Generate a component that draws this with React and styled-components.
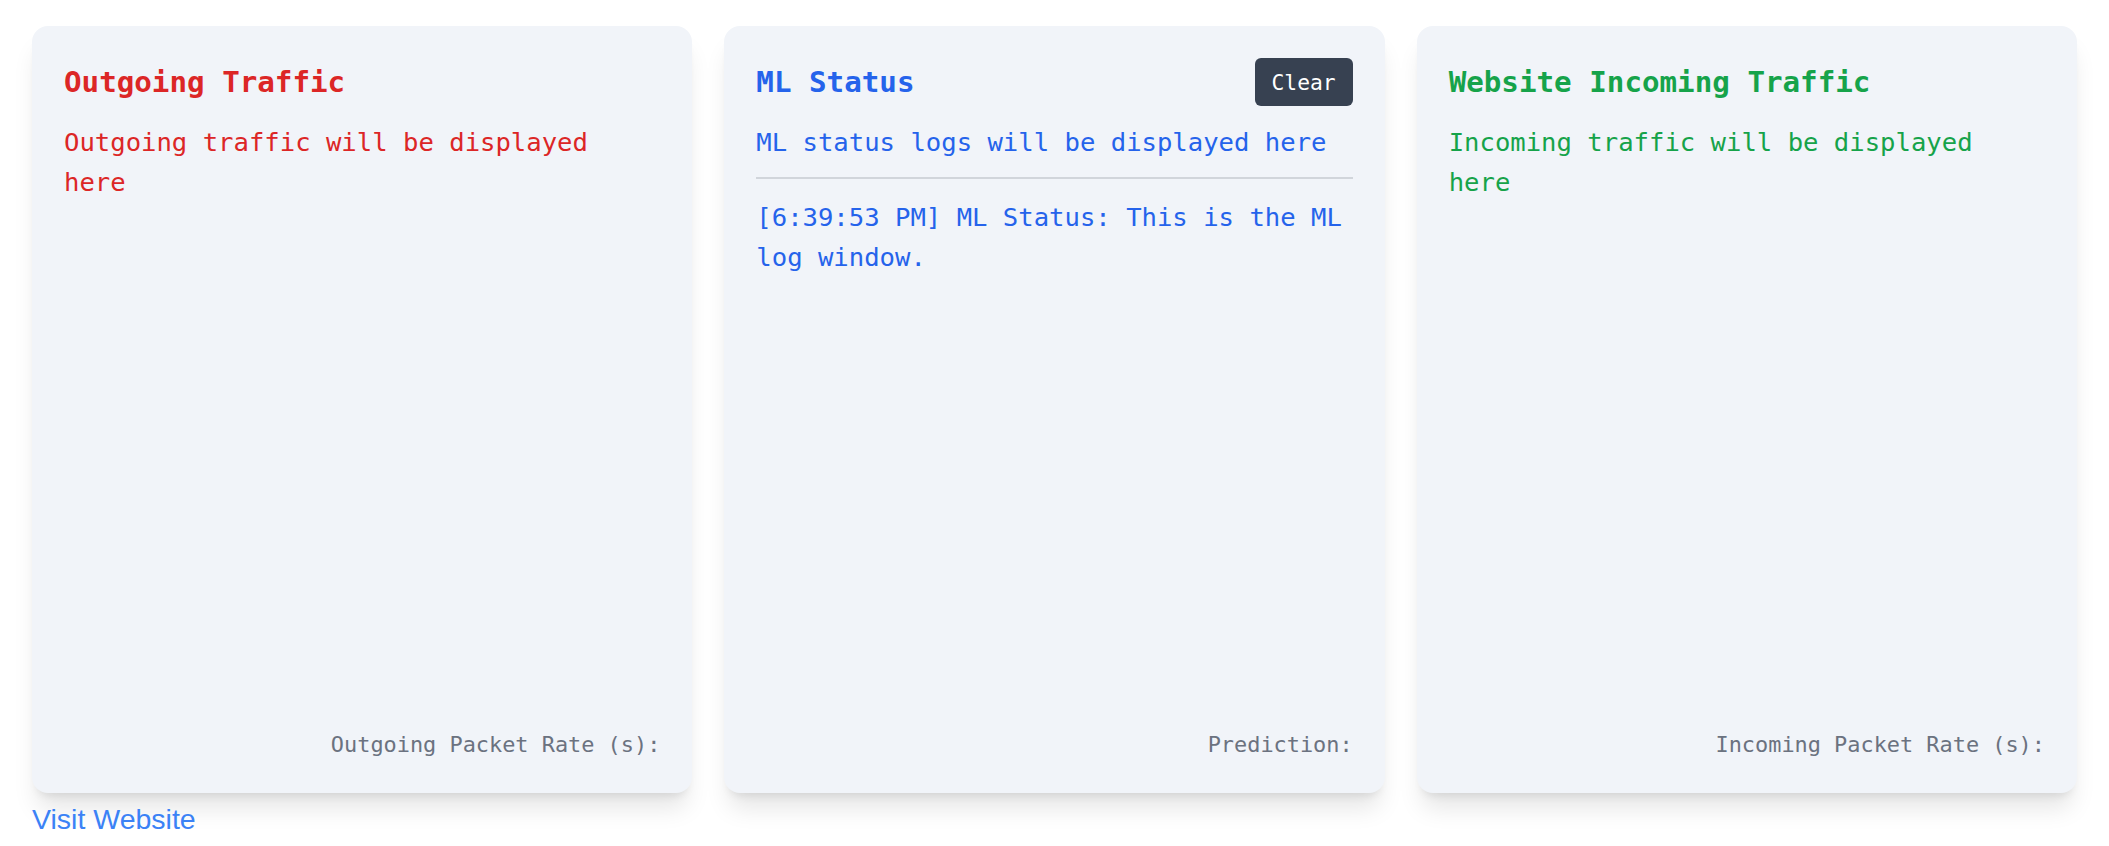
import React, { useState } from "react";
import styled, { createGlobalStyle } from "styled-components";

const GlobalStyle = createGlobalStyle`
  body {
    margin: 0;
    background: #ffffff;
  }
`;

const Page = styled.div`
  padding: 26px 32px 0;
`;

const Row = styled.div`
  display: flex;
  gap: 32px;
  align-items: flex-start;
`;

const Card = styled.div`
  flex: 1;
  height: 767px;
  box-sizing: border-box;
  display: flex;
  flex-direction: column;
  padding: 32px;
  background-color: #f1f4f9;
  border-radius: 16px;
  box-shadow: 0 20px 25px -5px rgba(0, 0, 0, 0.1),
    0 8px 10px -6px rgba(0, 0, 0, 0.1);
  font-family: "DejaVu Sans Mono", "Liberation Mono", monospace;
  color: ${({ tone }) => tone};
`;

const Header = styled.div`
  display: flex;
  align-items: center;
  justify-content: space-between;
  height: 48px;
`;

const Title = styled.h2`
  margin: 0;
  font-size: 29.2px;
  font-weight: 700;
  line-height: 48px;
`;

const ClearButton = styled.button`
  height: 48px;
  padding: 0 17px;
  border: none;
  border-radius: 6px;
  background-color: #374151;
  color: #ffffff;
  font-family: "DejaVu Sans Mono", "Liberation Mono", monospace;
  font-size: 21.3px;
  cursor: pointer;
`;

const Placeholder = styled.p`
  margin: 16px 0 0;
  font-size: 25.6px;
  line-height: 40px;
  ${({ divided }) =>
    divided &&
    `
    padding-bottom: 15px;
    border-bottom: 2px solid #d1d5db;
  `}
`;

const LogLine = styled.p`
  margin: 18px 0 0;
  font-size: 25.6px;
  line-height: 40px;
`;

const Footer = styled.div`
  margin-top: auto;
  text-align: right;
  font-size: 21.9px;
  line-height: 32px;
  color: #6b7280;
`;

const VisitLink = styled.a`
  display: inline-block;
  margin-top: 10px;
  font-family: "Liberation Sans", Arial, sans-serif;
  font-size: 28.5px;
  color: #3b82f6;
  text-decoration: none;
`;

export default function App() {
  const [logs, setLogs] = useState([
    "[6:39:53 PM] ML Status: This is the ML log window.",
  ]);

  return (
    <Page>
      <GlobalStyle />
      <Row>
        <Card tone="#dc2626">
          <Header>
            <Title>Outgoing Traffic</Title>
          </Header>
          <Placeholder>Outgoing traffic will be displayed here</Placeholder>
          <Footer>Outgoing Packet Rate (s):</Footer>
        </Card>
        <Card tone="#2563eb">
          <Header>
            <Title>ML Status</Title>
            <ClearButton onClick={() => setLogs([])}>Clear</ClearButton>
          </Header>
          <Placeholder divided>ML status logs will be displayed here</Placeholder>
          {logs.map((line) => (
            <LogLine key={line}>{line}</LogLine>
          ))}
          <Footer>Prediction:</Footer>
        </Card>
        <Card tone="#16a34a">
          <Header>
            <Title>Website Incoming Traffic</Title>
          </Header>
          <Placeholder>Incoming traffic will be displayed here</Placeholder>
          <Footer>Incoming Packet Rate (s):</Footer>
        </Card>
      </Row>
      <VisitLink href="#">Visit Website</VisitLink>
    </Page>
  );
}
